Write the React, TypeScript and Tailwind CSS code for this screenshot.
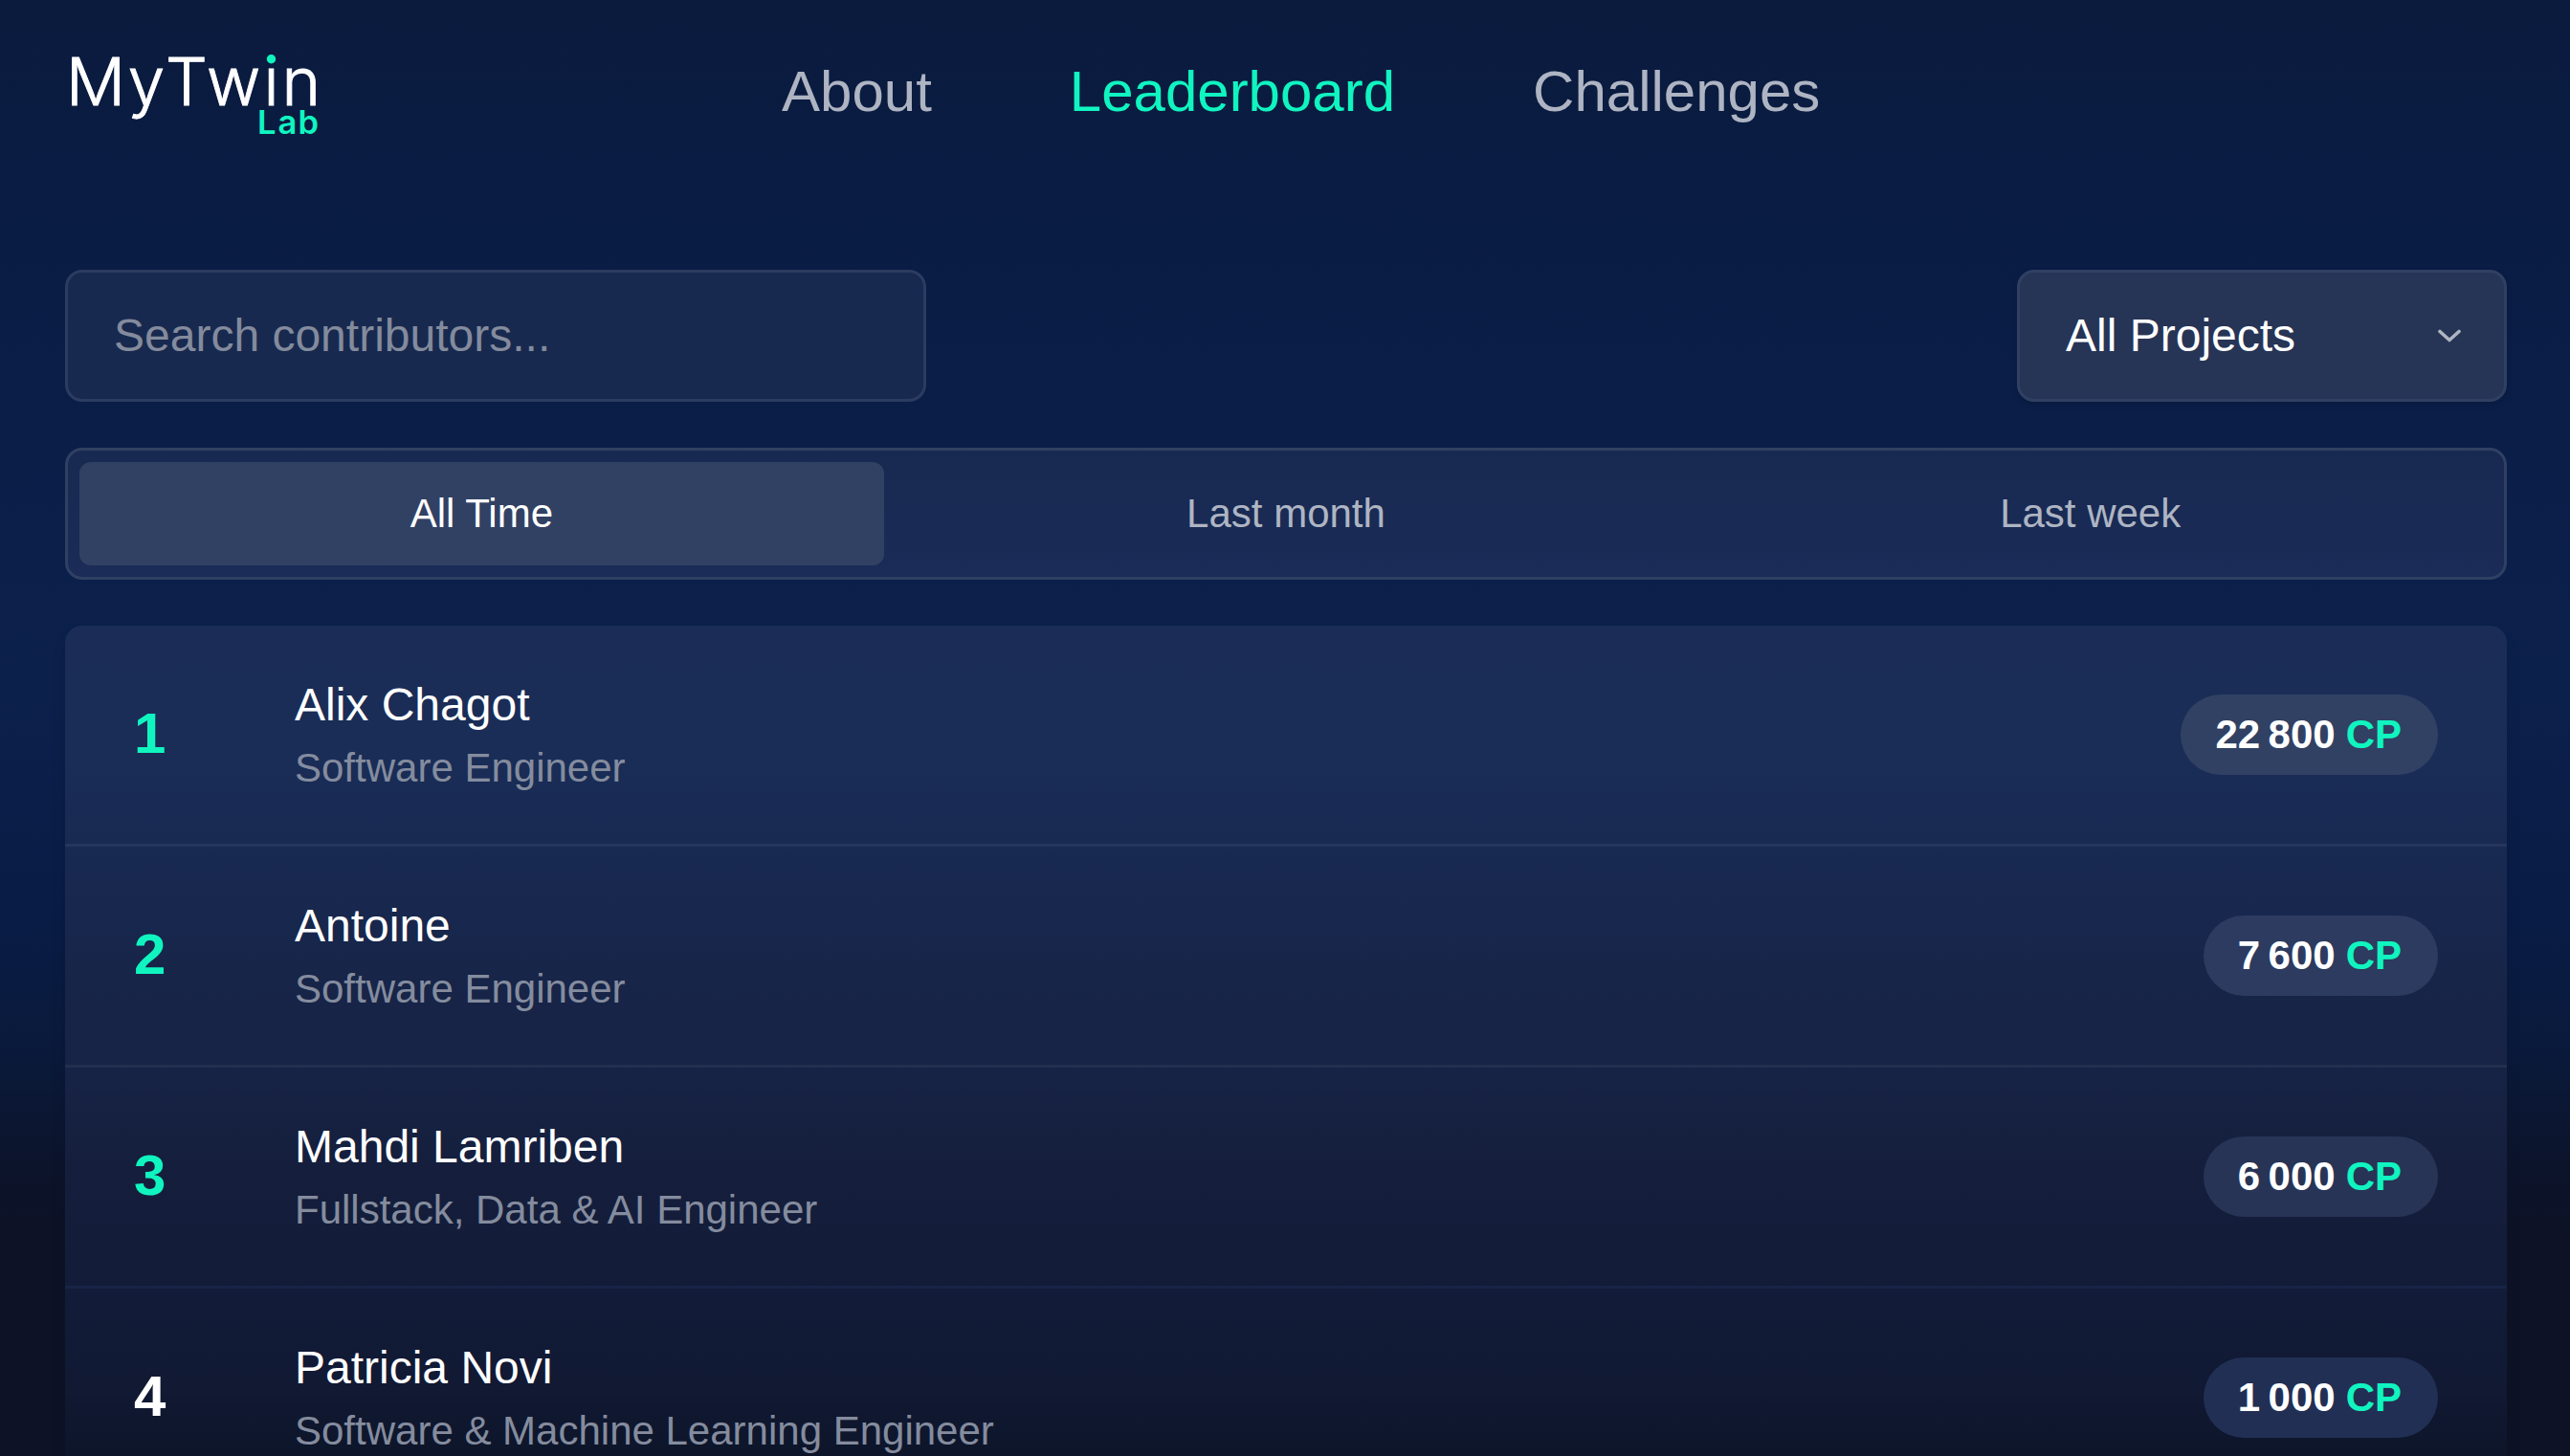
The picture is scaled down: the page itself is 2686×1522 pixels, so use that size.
import React, { useState } from 'react';

const navLinks = [
  { label: 'About', active: false },
  { label: 'Leaderboard', active: true },
  { label: 'Challenges', active: false },
];

const periods = ['All Time', 'Last month', 'Last week'];

const contributors = [
  { rank: 1, name: 'Alix Chagot', role: 'Software Engineer', points: '22\u202f800', pill: 'bg-[#314164]' },
  { rank: 2, name: 'Antoine', role: 'Software Engineer', points: '7\u202f600', pill: 'bg-[#2c3b5f]' },
  { rank: 3, name: 'Mahdi Lamriben', role: 'Fullstack, Data & AI Engineer', points: '6\u202f000', pill: 'bg-[#273456]' },
  { rank: 4, name: 'Patricia Novi', role: 'Software & Machine Learning Engineer', points: '1\u202f000', pill: 'bg-[#222f54]' },
];

const Logo = () => (
  <svg width="272" height="110" viewBox="68 41 272 110" className="font-['Inter',sans-serif]" aria-label="MyTwin Lab">
    {/* dotless i, the green dot is drawn separately */}
    <text x="69 133.8 172.9 216 275.4 294.5" y="109.7" fontSize="69" fontWeight="300" fill="#fff" stroke="#fff" strokeWidth="0.9">MyTwın</text>
    <circle cx="283.5" cy="61.7" r="4.7" fill="#10f5c0" />
    <text x="269 290.5 311.5" y="140" fontSize="34.5" fontWeight="600" fill="#10f5c0">Lab</text>
  </svg>
);

const Header = () => (
  <header className="flex items-center h-48 pl-[68px]">
    <div className="w-[749px]">
      <Logo />
    </div>
    <nav className="flex gap-36 text-[60px] leading-[90px]">
      {navLinks.map((link) => (
        <a key={link.label} href="#" className={link.active ? 'text-[#10f5c0]' : 'text-[#aeb4c2]'}>
          {link.label}
        </a>
      ))}
    </nav>
  </header>
);

const App = () => {
  const [period, setPeriod] = useState('All Time');

  return (
    <div className="h-[1522px] w-full overflow-hidden font-['Liberation_Sans',Arial,sans-serif] text-white bg-[linear-gradient(180deg,#0b1b3e_0px,#0a1c43_190px,#0a1e48_450px,#0b204b_720px,#091c46_950px,#0a1a3c_1090px,#0c142b_1220px,#0d1226_1290px)]">
      <Header />

      <main className="mt-[90px] pl-[68px] pr-[66px]">
        <div className="flex justify-between">
          <input
            type="text"
            placeholder="Search contributors..."
            className="w-[900px] h-[138px] px-12 pb-0.5 text-[48px] rounded-[18px] border-3 border-[#2c3c60] bg-[#18294f] placeholder:text-[#838b9d] outline-none"
          />
          <button className="flex items-center justify-between w-[512px] h-[138px] pl-12 pr-[45px] text-[48px] rounded-[18px] border-3 border-[#304063] bg-[#263456] shadow-[0_3px_6px_rgba(0,0,0,0.12)]">
            <span>All Projects</span>
            <svg width="24" height="14" viewBox="0 0 24 14" fill="none" stroke="#aeb4c2" strokeWidth="3.6" strokeLinecap="round" strokeLinejoin="round">
              <path d="M2 2.5L12 11.5L22 2.5" />
            </svg>
          </button>
        </div>

        {/* Period tabs */}
        <div className="flex mt-12 p-3 h-[138px] rounded-[18px] border-3 border-[#304063] bg-[linear-gradient(180deg,#182951,#1a2c57)]">
          {periods.map((item) => (
            <button
              key={item}
              onClick={() => setPeriod(item)}
              className={`flex-1 pb-0.5 text-[42px] rounded-xl ${
                item === period ? 'bg-[#314164] text-white' : 'text-[#aeb5c3]'
              }`}
            >
              {item}
            </button>
          ))}
        </div>

        <div className="mt-12 rounded-t-[18px] shadow-[0_12px_18px_-3px_rgba(0,0,0,0.15)] bg-[linear-gradient(180deg,#1b2d57_0px,#1a2d57_140px,#182951_240px,#172447_400px,#172345_470px,#151f3d_560px,#121c38_700px,#111933_800px,#0d152a_868px)]">
          {contributors.map((person) => (
            <div key={person.rank} className={`flex items-center h-[231px] px-[72px] border-b-3 ${person.rank === 3 ? 'border-[#182446]' : 'border-white/6'}`}>
              <div className={`w-[168px] pb-0.5 text-[60px] font-bold ${person.rank <= 3 ? 'text-[#10f5c0]' : 'text-white'}`}>
                {person.rank}
              </div>
              <div className="flex-1 pb-0.5">
                <p className="text-[48px] leading-[72px]">{person.name}</p>
                <p className="text-[42px] leading-[60px] text-[#848c9e]">{person.role}</p>
              </div>
              <div className={`flex items-center h-[84px] pl-9 pr-[38px] pb-0.5 gap-[11px] rounded-full text-[42px] font-bold ${person.pill}`}>
                <span>{person.points}</span>
                <span className="text-[#10f5c0]">CP</span>
              </div>
            </div>
          ))}
        </div>
      </main>
    </div>
  );
};

export default App;
